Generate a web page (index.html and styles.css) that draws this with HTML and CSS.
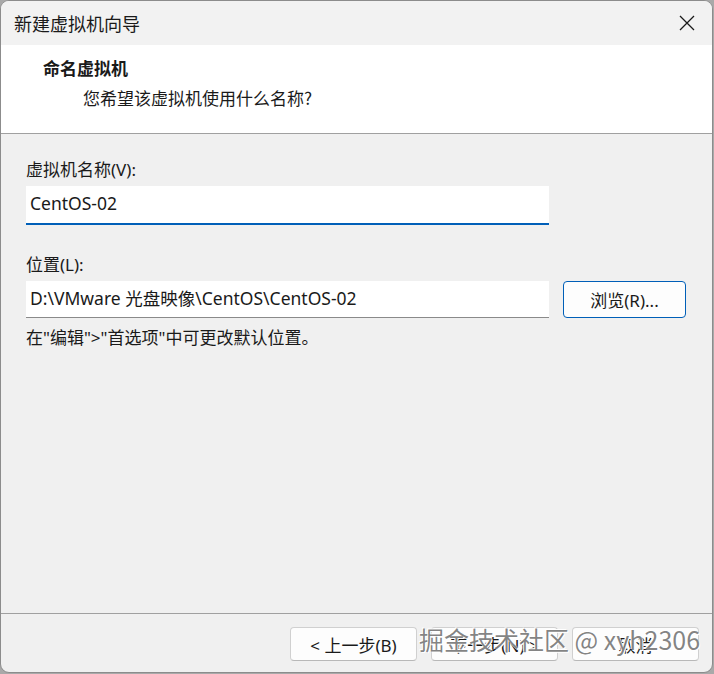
FILE: index.html
```html
<!DOCTYPE html>
<html lang="zh-CN">
<head>
  <meta charset="UTF-8">
  <meta name="viewport" content="width=device-width, initial-scale=1.0">
  <title>新建虚拟机向导</title>
  <link rel="stylesheet" href="styles.css">
</head>
<body>
  <div class="window">
    <div class="titlebar">
      <span class="title">新建虚拟机向导</span>
      <button class="close" aria-label="关闭">
        <svg width="16" height="16" viewBox="0 0 16 16">
          <path d="M1 1 L15 15 M15 1 L1 15" stroke="#1a1a1a" stroke-width="1.3" fill="none"/>
        </svg>
      </button>
    </div>

    <div class="header">
      <div class="heading">命名虚拟机</div>
      <div class="subheading">您希望该虚拟机使用什么名称?</div>
    </div>

    <div class="content">
      <label class="label">虚拟机名称(V):</label>
      <div class="field focused">CentOS-02</div>

      <label class="label second">位置(L):</label>
      <div class="row">
        <div class="field">D:\VMware 光盘映像\CentOS\CentOS-02</div>
        <button class="btn browse">浏览(R)...</button>
      </div>
      <p class="hint">在"编辑"&gt;"首选项"中可更改默认位置。</p>
    </div>

    <div class="footer">
      <button class="btn">&lt; 上一步(B)</button>
      <button class="btn">下一步(N) &gt;</button>
      <button class="btn">取消</button>
      <span class="watermark">掘金技术社区 @ xyh2306</span>
    </div>
  </div>
</body>
</html>
```

FILE: styles.css
```css
body {
  margin: 0;
  background-color: #a9a9a9;
  font-family: "Noto Sans", "Noto Sans CJK SC", sans-serif;
  color: #1a1a1a;
}
.window {
  width: 711px;
  height: 671px;
  background-color: #f0f0f0;
  border: 1px solid #8c8c8c;
  border-radius: 9px;
  overflow: hidden;
  display: flex;
  flex-direction: column;
  position: relative;
}
.titlebar {
  height: 44px;
  display: flex;
  align-items: center;
  justify-content: space-between;
  padding-left: 13px;
  background-color: #f2f2f2;
}
.title {
  font-size: 18px;
  font-family: "Noto Sans CJK SC", sans-serif;
}
.close {
  border: none;
  background: none;
  width: 46px;
  height: 44px;
  margin-right: 2px;
  display: flex;
  align-items: center;
  justify-content: center;
  padding: 0;
}
.header {
  height: 89px;
  background-color: #ffffff;
  border-bottom: 1px solid #a0a0a0;
  box-sizing: border-box;
  padding: 11px 0 0 42px;
  font-family: "Noto Sans CJK SC", sans-serif;
}
.heading {
  font-size: 17px;
  font-weight: bold;
  line-height: 24px;
}
.subheading {
  font-size: 17px;
  line-height: 24px;
  margin: 6px 0 0 40px;
}
.content {
  flex: 1;
  padding: 24px 0 0 25px;
  display: flex;
  flex-direction: column;
  align-items: flex-start;
}
.label {
  font-size: 17px;
  line-height: 24px;
  color: #1a1a1a;
}
.label.second {
  margin-top: 28px;
}
.field {
  width: 523px;
  height: 38px;
  margin-top: 4px;
  background-color: #ffffff;
  border-bottom: 1px solid #8a8a8a;
  box-sizing: border-box;
  padding: 5px 0 0 4px;
  font-size: 17.5px;
  line-height: 24px;
}
.field.focused {
  height: 39px;
  border-bottom: 2px solid #005fb8;
}
.row {
  display: flex;
  gap: 14px;
  margin-top: 4px;
}
.row .field {
  margin-top: 0;
  height: 37px;
}
.btn {
  font-family: "Noto Sans", "Noto Sans CJK SC", sans-serif;
  font-size: 17px;
  color: #1a1a1a;
  background-color: #fdfdfd;
  border: 1px solid #d0d0d0;
  border-bottom-color: #b8b8b8;
  border-radius: 4px;
  width: 127px;
  height: 34px;
  padding: 0;
}
.browse {
  width: 123px;
  height: 37px;
  border: 1px solid #005fb8;
}
.hint {
  margin: 8px 0 0 0;
  font-size: 17px;
  line-height: 24px;
  font-family: "Noto Sans", "Noto Sans CJK SC", sans-serif;
}
.footer {
  height: 59px;
  border-top: 1px solid #a0a0a0;
  box-sizing: border-box;
  display: flex;
  justify-content: flex-end;
  align-items: flex-start;
  gap: 14px;
  padding: 13px 13px 0 0;
}
.watermark {
  position: absolute;
  left: 418px;
  bottom: 18px;
  font-size: 25px;
  line-height: 30px;
  font-family: "Noto Sans CJK SC", sans-serif;
  color: rgba(110, 110, 110, 0.85);
  text-shadow: 1px 1px 0 #ffffff, -1px -1px 0 #ffffff;
  pointer-events: none;
}
```
